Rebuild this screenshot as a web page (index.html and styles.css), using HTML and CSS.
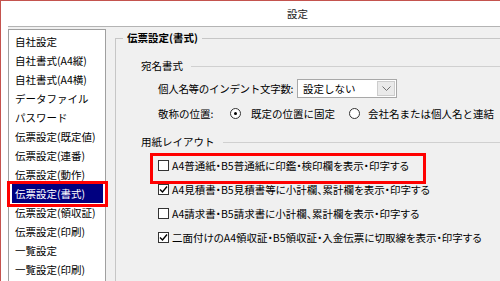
FILE: index.html
```html
<!DOCTYPE html>
<html lang="ja">
<head>
    <meta charset="UTF-8">
    <meta name="viewport" content="width=device-width, initial-scale=1.0">
    <title>設定</title>
    <link rel="stylesheet" href="styles.css">
</head>
<body>
<div class="window">
    <div class="titlebar">設定</div>
    <div class="client">
        <ul class="menu">
            <li>自社設定</li>
            <li>自社書式(A4縦)</li>
            <li>自社書式(A4横)</li>
            <li>データファイル</li>
            <li>パスワード</li>
            <li>伝票設定(既定値)</li>
            <li>伝票設定(連番)</li>
            <li>伝票設定(動作)</li>
            <li class="current">伝票設定(書式)</li>
            <li>伝票設定(領収証)</li>
            <li>伝票設定(印刷)</li>
            <li>一覧設定</li>
            <li>一覧設定(印刷)</li>
        </ul>
        <div class="pane">
            <fieldset class="group">
                <legend>伝票設定(書式)</legend>
                <div class="sub"><span>宛名書式</span></div>
                <div class="field indent">
                    <span class="label">個人名等のインデント文字数:</span>
                    <div class="combo">
                        <span>設定しない</span>
                        <span class="drop">
                            <svg width="9" height="6" viewBox="0 0 9 6"><polyline points="0.5,0.5 4.5,4.5 8.5,0.5" fill="none" stroke="#707070" stroke-width="1"/></svg>
                        </span>
                    </div>
                </div>
                <div class="field honor">
                    <span class="label short">敬称の位置:</span>
                    <span class="radio on"></span><span class="opt">既定の位置に固定</span>
                    <span class="radio"></span><span>会社名または個人名と連結</span>
                </div>
                <div class="sub"><span>用紙レイアウト</span></div>
                <div class="check marked"><span class="box"></span>A4普通紙・B5普通紙に印鑑・検印欄を表示・印字する</div>
                <div class="check"><span class="box checked"><svg width="9" height="9" viewBox="0 0 9 9"><polyline points="1,4.5 3.5,7 8,1.5" fill="none" stroke="#000" stroke-width="1.4"/></svg></span>A4見積書・B5見積書等に小計欄、累計欄を表示・印字する</div>
                <div class="check"><span class="box"></span>A4請求書・B5請求書に小計欄、累計欄を表示・印字する</div>
                <div class="check"><span class="box checked"><svg width="9" height="9" viewBox="0 0 9 9"><polyline points="1,4.5 3.5,7 8,1.5" fill="none" stroke="#000" stroke-width="1.4"/></svg></span>二面付けのA4領収証・B5領収証・入金伝票に切取線を表示・印字する</div>
            </fieldset>
        </div>
    </div>
</div>
</body>
</html>
```

FILE: styles.css
```css
* { box-sizing: border-box; }
body { margin: 0; width: 500px; height: 281px; overflow: hidden; background: #fff; color: #000;
    font-family: "Noto Sans CJK JP", "Noto Sans", sans-serif; font-size: 10.5px; }

.window { height: 281px; border-top: 1px solid #c4534e; border-left: 1px solid #c4534e; }
.titlebar { height: 25px; line-height: 25px; padding-left: 286px; background: #fff; color: #222; }

.client { display: flex; height: 255px; margin-left: 7px; padding-top: 2px; background: #f0f0f0; border-top: 1px solid #b4b4b4; }

/* 左のメニュー */
.menu { list-style: none; margin: 0; padding: 2px 0 0; width: 98px; background: #fff; border: 1px solid #a0a0a0; border-bottom: none; }
.menu li { height: 19px; line-height: 19px; padding-left: 6px; white-space: nowrap; }
.menu li.current { position: relative; margin: 0 2px 0 3px; padding-left: 3px; background: #000080; color: #fff; }
.menu li.current::after { content: ''; position: absolute; left: -5px; right: -5px; top: -3px; bottom: -4px; border: 3px solid #f00; }

/* 右の設定 */
.pane { flex: 1; margin-left: 9px; }
.group { margin: 2px 0 0; padding: 0 0 0 7px; min-width: 0; height: 260px; border: 1px solid #c6c6c6; border-right: none; border-bottom: none; }
.group legend { padding: 0 4px; font-weight: bold; line-height: 14px; }

.sub { display: flex; align-items: center; height: 14px; line-height: 14px; margin: 14px 0 0 18px; }
.sub::after { content: ''; flex: 1; margin-left: 8px; border-top: 1px solid #d0d0d0; }

.field { display: flex; align-items: center; margin-left: 35px; white-space: nowrap; }
.indent { height: 19px; margin-top: 6px; }
.honor { height: 16px; margin-top: 7px; }
.label { width: 139px; }
.indent .label { letter-spacing: -0.3px; }
.label.short { width: 72px; }

.combo { display: flex; align-items: center; width: 100px; height: 19px; padding-left: 5px; background: #fff; border: 1px solid #a8a8a8; }
.drop { display: flex; align-items: center; justify-content: center; width: 18px; height: 15px; margin: 0 1px 0 auto; background: #eaeaea; border: 1px solid #cdcdcd; }

.radio { position: relative; width: 11px; height: 11px; margin-right: 10px; border: 1px solid #333; border-radius: 50%; background: #fff; }
.radio.on::after { content: ''; position: absolute; left: 3px; top: 3px; width: 3px; height: 3px; border-radius: 50%; background: #000; }
.opt { width: 98px; }
.opt + .radio { margin-right: 8px; }

.check { display: flex; align-items: center; height: 24px; margin-left: 35px; white-space: nowrap; font-feature-settings: "palt"; }
.sub + .check { margin-top: 4px; }
.box { display: flex; align-items: center; justify-content: center; width: 11px; height: 11px; margin-right: 3px; border: 1px solid #333; background: #fff; }
.check.marked { position: relative; }
.check.marked::after { content: ''; position: absolute; left: -8px; top: 0; width: 270px; height: 25px; border: 3px solid #f00; }
```
